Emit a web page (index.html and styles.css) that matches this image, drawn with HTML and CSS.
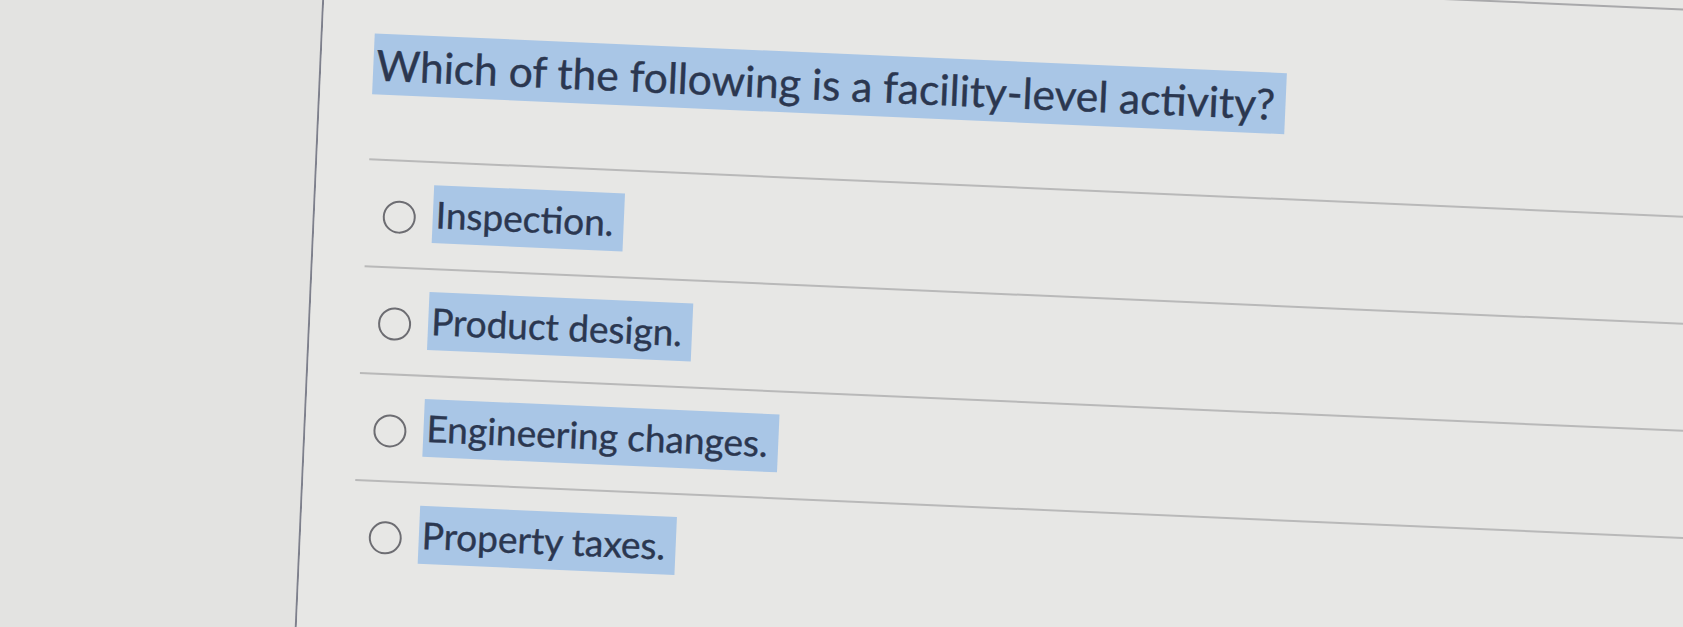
FILE: index.html
```html
<!DOCTYPE html>
<html lang="en">
<head>
<meta charset="utf-8">
<title>Quiz question</title>
<link rel="stylesheet" href="styles.css">
</head>
<body>
<div class="page">
  <aside class="sidebar"></aside>
  <main class="main">
    <section class="question">
      <div class="q-text"><span class="hl title">Which of the following is a facility-level activity?</span></div>
      <div class="answers">
        <label class="answer"><span class="radio"></span><span class="hl opt">Inspection.</span></label>
        <label class="answer"><span class="radio"></span><span class="hl opt">Product design.</span></label>
        <label class="answer"><span class="radio"></span><span class="hl opt">Engineering changes.</span></label>
        <label class="answer"><span class="radio"></span><span class="hl opt">Property taxes.</span></label>
      </div>
    </section>
  </main>
</div>
</body>
</html>
```

FILE: styles.css
```css
html, body {
  margin: 0;
  padding: 0;
  width: 1683px;
  height: 627px;
  overflow: hidden;
  background: #e6e6e4;
}

.page {
  width: 1883px;
  height: 827px;
  margin: -100px 0 0 -100px;
  display: grid;
  grid-template-columns: 411px 1fr;
  transform: rotate(2.5deg);
  transform-origin: 941px 413px;
  font-family: "Lato", "Liberation Sans", sans-serif;
  color: #2b3750;
}

.sidebar {
  background: #e3e3e1;
  border-right: 2px solid #7e808c;
}

.main {
  background: #e7e7e5;
  padding-top: 72px;
}

.question {
  margin-left: 52px;
  border-top: 2px solid #a9a9ab;
}

.q-text {
  display: flex;
  margin-top: 80px;
}

.hl {
  display: inline-block;
  background: #a9c6e6;
  padding: 0 10px 0 3px;
  white-space: nowrap;
  -webkit-text-stroke: 0.4px #2b3750;
}

.title {
  font-size: 42.5px;
  line-height: 61px;
}

.answers {
  margin-top: 64px;
}

.answer {
  display: flex;
  align-items: center;
  gap: 17px;
  height: 107px;
  padding-left: 16px;
  border-top: 2px solid #b9b9b9;
  box-sizing: border-box;
}

.radio {
  width: 33px;
  height: 33px;
  box-sizing: border-box;
  border: 2.5px solid #6d6d72;
  border-radius: 50%;
  flex: none;
  margin-top: 6px;
}

.opt {
  font-size: 37px;
  line-height: 58px;
  margin-bottom: 3px;
}
```
